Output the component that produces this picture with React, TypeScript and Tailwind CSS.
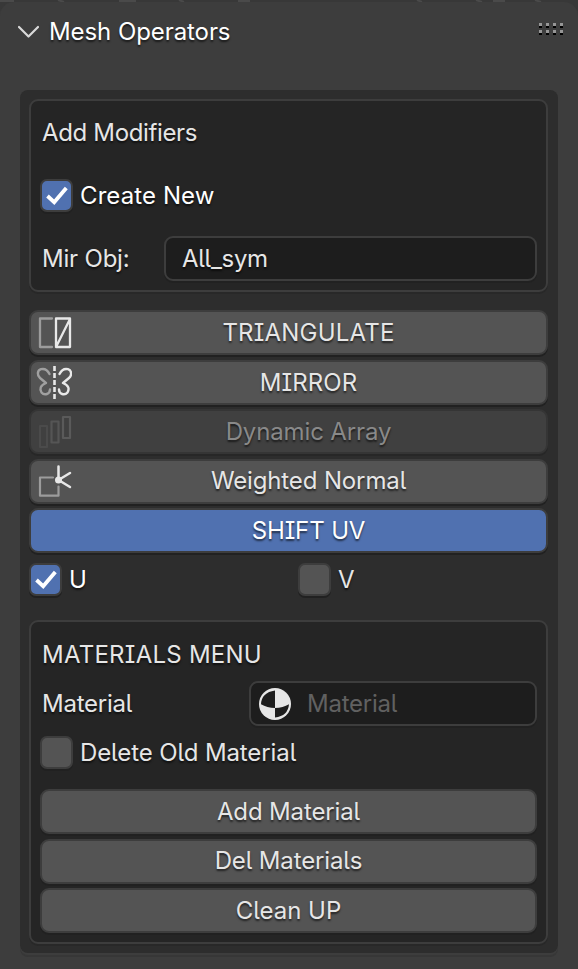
import React from "react";

const textShadow = "[text-shadow:0_2px_2px_rgba(0,0,0,0.6)]";

function CheckBox({ label, checked = false, bright = false }: { label: string; checked?: boolean; bright?: boolean }) {
  return (
    <label className="flex h-[33px] items-center gap-[7px]">
      <span
        className={`flex size-[33px] shrink-0 items-center justify-center rounded-[7px] border-2 border-[#3d3d3d] shadow-[0_2px_0_#212121] ${
          checked ? "bg-[#5071b0]" : "bg-[#545454]"
        }`}
      >
        {checked && (
          <svg width="29" height="29" viewBox="0 0 29 29" fill="none">
            <path d="M5.5 15L12.2 21.2L24.3 7" stroke="#fff" strokeWidth="3.8" />
          </svg>
        )}
      </span>
      <span className={`${textShadow} ${bright ? "tracking-[0.1px] text-white" : "tracking-[-0.1px] text-[#e6e6e6]"}`}>
        {label}
      </span>
    </label>
  );
}

type Tone = "normal" | "disabled" | "active";

const tones: Record<Tone, string> = {
  normal: "bg-[#545454] border-[#3d3d3d] text-[#e6e6e6] shadow-[0_2px_0_#212121]",
  disabled: "bg-[#404040] border-[#353535] text-[#898989] shadow-[0_2px_0_#272727]",
  active: "bg-[#5071b0] border-[#3d3d3d] text-white shadow-[0_2px_0_#212121]",
};

function Button({
  label,
  tone = "normal",
  icon,
  iconColumn = false,
  labelClass = "tracking-[-0.13px]",
}: {
  label: string;
  tone?: Tone;
  icon?: React.ReactNode;
  iconColumn?: boolean;
  labelClass?: string;
}) {
  return (
    <button className={`flex h-[45px] w-full items-center rounded-[9px] border-2 ${tones[tone]}`}>
      {(icon || iconColumn) && <span className="ml-[5px] w-[35px] shrink-0">{icon}</span>}
      <span className={`flex-1 text-center ${labelClass} ${textShadow}`}>{label}</span>
    </button>
  );
}

function TriangulateIcon() {
  return (
    <svg width="36" height="36" viewBox="0 0 36 36" fill="none" strokeWidth="2.3" strokeLinejoin="round" strokeLinecap="round">
      <path d="M16 3.5H4V32H16" stroke="#9c9c9c" />
      <path d="M20 3.5H34V32H20ZM20 32L34 4" stroke="#e8e8e8" />
    </svg>
  );
}

function MirrorIcon() {
  return (
    <svg width="36" height="36" viewBox="0 0 36 36" fill="none" strokeWidth="2.4" strokeLinecap="round" strokeLinejoin="round">
      <path d="M13.5 10C11.5 6 8 4.5 5 5.2C1 6.5 1 11.5 4 14L10 19C4 21.5 3.5 25 5.5 28.5C8.5 32 14 30 14 25.5" stroke="#a0a0a0" />
      <path d="M23.5 10C25.5 6 29 4.5 32 5.2C36 6.5 36 11.5 33 14L27 19C33 21.5 33.5 25 31.5 28.5C28.5 32 23 30 23 25.5" stroke="#e8e8e8" />
      <path d="M18.5 2V35" stroke="#e8e8e8" strokeWidth="2.6" strokeDasharray="5 2" strokeLinecap="butt" />
    </svg>
  );
}

function ArrayIcon() {
  return (
    <svg width="36" height="36" viewBox="0 0 36 36" fill="none" strokeWidth="2.2" strokeLinejoin="round">
      <path d="M4 12H11V33H4Z" stroke="#4b4b4b" />
      <path d="M15.5 7.5H22.5V28.5H15.5Z" stroke="#555" />
      <path d="M27 3H34V24H27Z" stroke="#5a5a5a" />
    </svg>
  );
}

function NormalIcon() {
  return (
    <svg width="36" height="36" viewBox="0 0 36 36" fill="none" strokeWidth="2.2" strokeLinejoin="round" strokeLinecap="round">
      <path d="M17 14.5H4V32.7H22.5V23.5" stroke="#9c9c9c" />
      <path d="M22.5 17V3.5M22.5 17L34 10M22.5 17L34 24" stroke="#e8e8e8" strokeWidth="2.5" />
      <circle cx="22.5" cy="17" r="3.5" fill="#e8e8e8" />
    </svg>
  );
}

function MaterialIcon() {
  return (
    <svg width="32" height="32" viewBox="0 0 32 32">
      <circle cx="16" cy="16" r="16" fill="#e6e6e6" />
      <path d="M16 2.5V20Q8 20 2 16.3Q2.5 4.5 16 2.5Z" fill="#1d1d1d" />
      <path d="M16 20Q24 20 30 16.3Q29 28 16 29.5Z" fill="#1d1d1d" />
    </svg>
  );
}

const box = "rounded-[9px] border-2 border-[#3d3d3d] bg-[#252525] px-[9px] shadow-[0_2px_0_#282828]";
const field = "flex h-[45px] items-center rounded-[9px] border-2 border-[#3d3d3d] bg-[#1d1d1d] shadow-[0_2px_0_#212121]";

export default function App() {
  return (
    <div className="h-[969px] w-[578px] bg-[#383838] font-[Inter,sans-serif] text-[24px] leading-[30px] text-[#e6e6e6] [font-feature-settings:'cv05','cv08']">
      <svg className="block" width="578" height="2" viewBox="0 0 578 2">
        <path
          d="M0 1H14M58 0L64 2M119 1H136M179 0L184 2M238 1H250M417 0L422 2M476 0L482 2M493 1H505M535 0L541 2"
          stroke="#4a4a4a"
          strokeWidth="2"
        />
      </svg>
      <div className="h-[967px] rounded-t-[14px] bg-[#3d3d3d]">
        <header className="flex h-[88px] items-start justify-between pt-[14px] pr-[15px] pl-[18px]">
          <div className="flex items-center pt-px">
            <svg width="21" height="14" viewBox="0 0 21 14" fill="none">
              <path d="M1 2L10.5 11.5L20 2" stroke="#d9d9d9" strokeWidth="2.2" strokeLinecap="round" strokeLinejoin="round" />
            </svg>
            <h1 className={`ml-[10px] tracking-[-0.08px] text-white ${textShadow}`}>Mesh Operators</h1>
          </div>
          <div className="mt-[7px] grid grid-cols-4 gap-x-1 gap-y-0.5">
            {Array.from({ length: 8 }, (_, i) => (
              <span key={i} className="h-[5px] w-[3px] border-b-2 border-black bg-[#969696]" />
            ))}
          </div>
        </header>

        <main className="mx-5 h-[863px] rounded-[8px] bg-[#2d2d2d] pt-[9px] pr-[10px] pl-[9px] shadow-[0_2px_0_#3d3d3d,0_4px_0_#373737]">
          <section className={`${box} h-[193px] pt-[17px]`}>
            <h2 className={`pl-0.5 tracking-[-0.35px] ${textShadow}`}>Add Modifiers</h2>
            <div className="mt-[31px]">
              <CheckBox label="Create New" checked bright />
            </div>
            <div className="mt-6 flex items-center">
              <span className={`w-[124px] pl-0.5 tracking-[-0.2px] ${textShadow}`}>Mir Obj:</span>
              <div className={`${field} flex-1 pl-4`}>
                <span className={`tracking-[-0.3px] ${textShadow}`}>All_sym</span>
              </div>
            </div>
          </section>

          <div className="mt-[18px] flex h-[243px] flex-col justify-between">
            <Button label="TRIANGULATE" icon={<TriangulateIcon />} labelClass="tracking-[0.2px]" />
            <Button label="MIRROR" icon={<MirrorIcon />} labelClass="pt-px tracking-[0.1px]" />
            <Button label="Dynamic Array" tone="disabled" icon={<ArrayIcon />} />
            <Button label="Weighted Normal" icon={<NormalIcon />} />
            <Button label="SHIFT UV" tone="active" iconColumn />
          </div>

          <div className="mt-[10px] flex">
            <div className="w-[269px]">
              <CheckBox label="U" checked bright />
            </div>
            <CheckBox label="V" />
          </div>

          <section className={`${box} mt-6 h-[324px] pt-[18px]`}>
            <h2 className={`pl-0.5 tracking-[0.25px] ${textShadow}`}>MATERIALS MENU</h2>
            <div className="mt-[11px] flex items-center">
              <span className={`w-[209px] pl-0.5 tracking-[-0.25px] ${textShadow}`}>Material</span>
              <div className={`${field} flex-1 gap-4 pl-2`}>
                <MaterialIcon />
                <span className="tracking-[-0.25px] text-[#616161]">Material</span>
              </div>
            </div>
            <div className="mt-[10px]">
              <CheckBox label="Delete Old Material" />
            </div>
            <div className="mt-5 flex h-36 flex-col justify-between">
              <Button label="Add Material" />
              <Button label="Del Materials" />
              <Button label="Clean UP" labelClass="" />
            </div>
          </section>
        </main>
      </div>
    </div>
  );
}
